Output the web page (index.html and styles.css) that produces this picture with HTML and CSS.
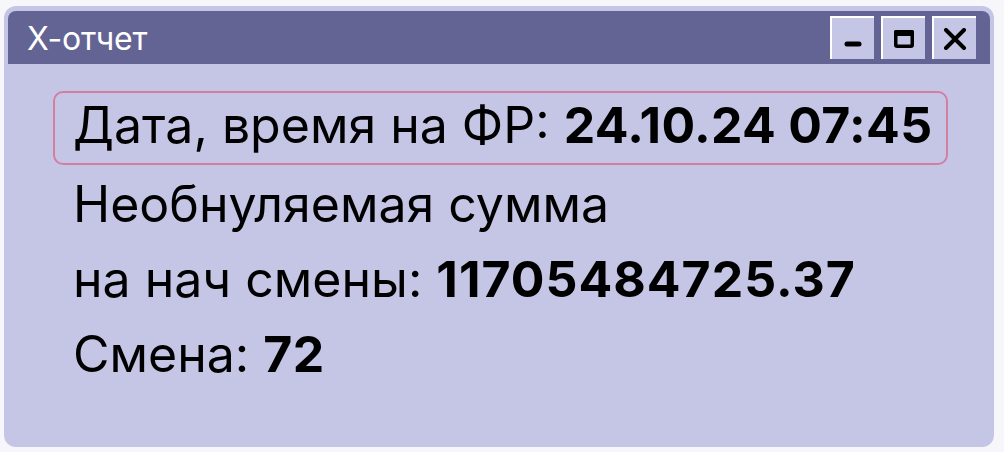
FILE: index.html
```html
<!DOCTYPE html>
<html lang="ru">
<head>
<meta charset="utf-8">
<link rel="stylesheet" href="styles.css">
</head>
<body>
<div class="window">
  <div class="titlebar">
    <span class="title">X-отчет</span>
    <div class="controls">
      <button class="btn" aria-label="Свернуть">
        <svg width="20" height="20" viewBox="0 0 20 20"><rect x="1.5" y="12.5" width="17" height="5" rx="2.5" fill="#000"/></svg>
      </button>
      <button class="btn" aria-label="Развернуть">
        <svg width="24" height="22" viewBox="0 0 24 22"><rect x="3.75" y="3.75" width="16.5" height="14.5" rx="1.5" fill="none" stroke="#000" stroke-width="3.5"/><rect x="2" y="2" width="20" height="6" rx="1.5" fill="#000"/></svg>
      </button>
      <button class="btn" aria-label="Закрыть">
        <svg width="24" height="22" viewBox="0 0 24 22"><path d="M3 2 L21 20 M21 2 L3 20" stroke="#000" stroke-width="4" stroke-linecap="round"/></svg>
      </button>
    </div>
  </div>
  <div class="content">
    <div class="row highlighted">Дата, время на ФР: <b>24.10.24 07:45</b></div>
    <div class="row">Необнуляемая сумма</div>
    <div class="row">на нач смены: <b class="wide">11705484725.37</b></div>
    <div class="row">Смена: <b>72</b></div>
  </div>
</div>
</body>
</html>
```
FILE: styles.css
```css
html, body {
  margin: 0;
  padding: 0;
  background: #f7f7fb;
  font-family: Inter, "Noto Sans", sans-serif;
}

.window {
  box-sizing: border-box;
  width: 990px;
  height: 441px;
  margin: 6px 0 0 4px;
  padding: 5px 4px 4px 4px;
  background: #c5c6e6;
  border-radius: 12px;
  display: flex;
  flex-direction: column;
}

.titlebar {
  height: 53px;
  background: #636494;
  border-radius: 8px 8px 0 0;
  display: flex;
  align-items: center;
  justify-content: space-between;
  padding: 0 14px 0 19px;
}

.title {
  color: #ffffff;
  font-size: 32px;
  font-weight: 400;
  letter-spacing: -0.2px;
  margin-top: 2px;
}

.controls {
  display: flex;
  gap: 7px;
  align-self: flex-end;
  margin-bottom: 5px;
}

.btn {
  box-sizing: border-box;
  width: 44px;
  height: 43px;
  padding: 0;
  margin: 0;
  background: #c5c6e6;
  border: none;
  border-left: 2px solid #ffffff;
  border-top: 2px solid #ffffff;
  display: flex;
  align-items: center;
  justify-content: center;
}

.content {
  padding: 27px 0 0 45px;
  display: flex;
  flex-direction: column;
}

.row {
  font-size: 50px;
  line-height: 75px;
  color: #000;
  padding-left: 20px;
  white-space: nowrap;
}

.row b {
  font-weight: 700;
  letter-spacing: 0.3px;
}

.row b.wide {
  letter-spacing: 1px;
}

.highlighted {
  box-sizing: border-box;
  width: 895px;
  height: 74px;
  line-height: 64px;
  padding-left: 18px;
  border: 2px solid #d47ea0;
  border-radius: 10px;
  margin-bottom: 2px;
}
```
